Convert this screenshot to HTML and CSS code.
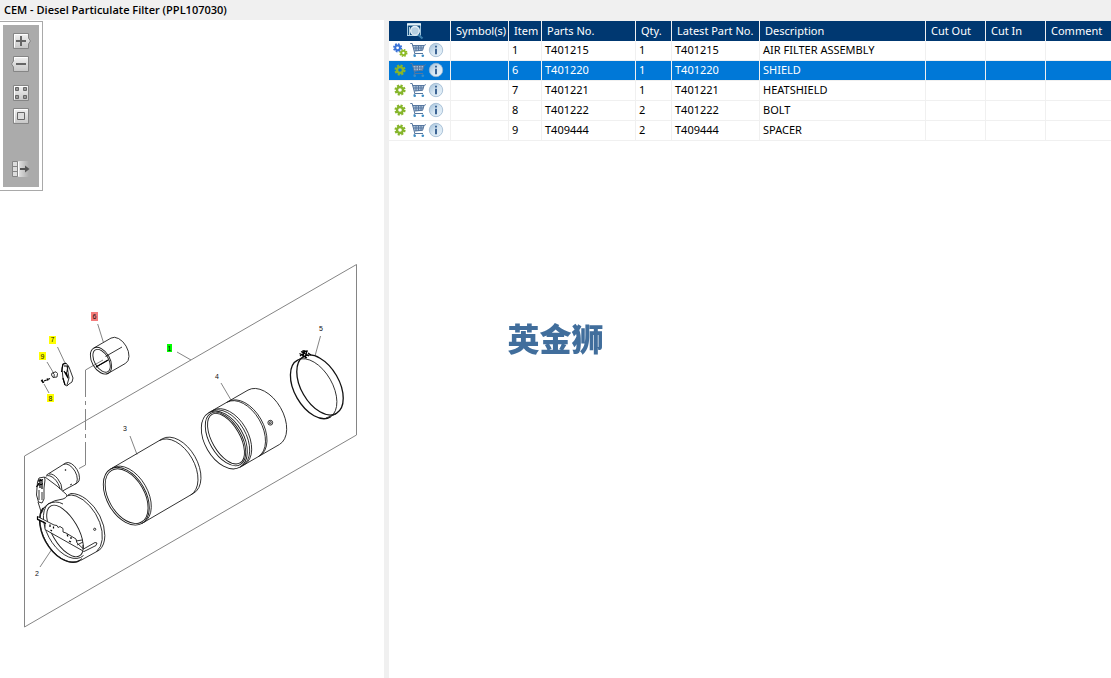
FILE: index.html
```html
<!DOCTYPE html>
<html lang="en">
<head>
<meta charset="utf-8">
<title>CEM - Diesel Particulate Filter (PPL107030)</title>
<link rel="stylesheet" href="styles.css">
</head>
<body>
<svg class="defs" aria-hidden="true">
  <defs>
    <linearGradient id="face" x1="0" y1="0" x2="0" y2="1"><stop offset="0" stop-color="#f2f2f2"/><stop offset="1" stop-color="#c6c6c6"/></linearGradient>
    <linearGradient id="fade" x1="0" y1="0" x2="1" y2="0"><stop offset="0" stop-color="#e4e4e4"/><stop offset="1" stop-color="#ababab"/></linearGradient>
    <linearGradient id="disc" x1="0" y1="0" x2="1" y2="1"><stop offset="0" stop-color="#9dbdd8"/><stop offset=".5" stop-color="#d6e6f2"/><stop offset="1" stop-color="#eaf3fa"/></linearGradient>
    <symbol id="cog" viewBox="0 0 16 16">
      <circle cx="8" cy="8" r="4.6" fill="none" stroke="#86b52b" stroke-width="2" stroke-dasharray="2.1 1.51"/>
      <circle cx="8" cy="8" r="3" fill="none" stroke="#86b52b" stroke-width="2.4"/>
    </symbol>
    <symbol id="cogs" viewBox="0 0 16 16">
      <g fill="none" stroke="#3b74d8"><circle cx="5.6" cy="5.8" r="3.7" stroke-width="1.8" stroke-dasharray="1.7 1.2"/><circle cx="5.6" cy="5.8" r="2.4" stroke-width="2"/></g>
      <g fill="none" stroke="#8dbb27"><circle cx="11.4" cy="11" r="3.3" stroke-width="1.6" stroke-dasharray="1.5 1.1"/><circle cx="11.4" cy="11" r="2.1" stroke-width="1.9"/></g>
    </symbol>
    <symbol id="cart" viewBox="0 0 16 16">
      <path d="M2.5 3.5H14L12.5 8.5L4.5 9.2Z" fill="#a9bfd8"/>
      <path d="M.3 1.5H2.2L4.8 11.5H13M2.5 3.5H14.2L15.8 2.5M14 3.5L12.6 8.3L4.3 9M3.5 6H13.2M6 4V9M8.5 4V9M11 4V8.5M4.8 11.5L4 13" fill="none" stroke="#56779f"/>
      <circle cx="4.7" cy="13.8" r="1.3" fill="#3c8cc4"/><circle cx="12.8" cy="13.8" r="1.3" fill="#3c8cc4"/>
    </symbol>
    <symbol id="info" viewBox="0 0 16 16">
      <circle cx="8" cy="8" r="6.7" fill="url(#disc)" stroke="#9ab6cf" stroke-width=".8"/>
      <path d="M7 3.8H9V5.6H7ZM7 6.8H9V12.2H7Z" fill="#3c6595"/>
    </symbol>
    <symbol id="preview" viewBox="0 0 18 18">
      <path d="M1.5 1.5H14.5V13.5H1.5Z" fill="#155080" stroke="#9fc4dc"/>
      <path d="M1 2.5H15" stroke="#e4f1f8" stroke-width="2"/><path d="M3.5 5V13M1 13.5H12" stroke="#b5d3e5"/>
      <path d="M12 12.5L16.5 16.5" stroke="#3b7fae" stroke-width="2.2"/>
      <circle cx="9" cy="8.8" r="4.3" fill="#b5cee0" stroke="#e5eff6" stroke-width="1.4"/>
    </symbol>
  </defs>
</svg>

<header class="titlebar"><h1>CEM - Diesel Particulate Filter (PPL107030)</h1></header>

<main class="workspace">
  <section class="drawing" aria-label="Exploded view">
    <svg class="sheet" viewBox="0 20 384 658" role="img" aria-label="Diesel particulate filter assembly">
      <g class="frame">
        <path d="M356.500 264.500V435L24.500 627V456Z"/>
        <path d="M177 352L191 360M97.700 324L103.300 342M57.500 347L65 363M47 362L53 372M49 393L44 384M130 436L137 454.500M221 383L231 400M320.500 336L315 356M40 567L52 549"/>
        <path d="M85.500 370V397M85.500 401V405M85.500 409V430M85.500 434V438M85.500 442V465L79 468.500M85.500 370L103 360"/>
      </g>
      <g class="ink">
        <path d="M93.700 348.100L111 338.100A9 14.500 -30 0 1 125.600 363.300L108.200 373.300"/>
        <ellipse cx="101" cy="360.700" rx="9" ry="14.500" transform="rotate(-30 101 360.700)"/>
        <ellipse cx="101.600" cy="360.800" rx="7" ry="12.500" transform="rotate(-30 101.600 360.800)"/>
        <path d="M105.500 356.500L122 347M96 367L108.500 360"/>
        <path class="bold" d="M96 367L108 360"/>
      </g>
      <g class="ink">
        <path d="M62 368L63 364L66 363L69 367L73 378L72 382L69 384L67 386L65 385L63 379Z"/>
        <path class="bold" d="M61.500 372L63 364L66 363.500M64 366L68 366L67 372M66 372L68 378L64 371M63 378L65 385"/>
        <path d="M67 366L69 378L67 385"/>
        <path d="M52 373L56 371.800L57.500 373.500L57 377L53 377.500L51.500 375ZM53 373Q55 374 54 377"/>
        <path class="bold" d="M41 380.500L44 382.500M42 379.500L43 383M44 381L50 378.500M47 378.500L48 380.500"/>
      </g>
      <g class="ink">
        <path d="M110.600 469L162.300 438.800A19.400 31.400 -30 0 1 193.700 493.200L142 523.400"/>
        <path d="M159.300 440.600A19.400 31.400 -30 0 1 190.700 495"/>
        <ellipse cx="126.300" cy="496.200" rx="19.400" ry="31.400" transform="rotate(-30 126.300 496.200)"/>
        <ellipse cx="126.600" cy="496.200" rx="17.800" ry="29.800" transform="rotate(-30 126.600 496.200)"/>
        <path d="M112.600 467.800A19.400 31.400 -30 0 1 144 522.200"/>
      </g>
      <g class="ink">
        <path d="M208.600 412.800L248 390.100A19.400 31.400 -30 0 1 279.400 444.500L240 467.200"/>
        <path d="M226.800 402.300A19.400 31.400 -30 0 1 258.200 456.700M228.300 401.500A19.400 31.400 -30 0 1 259.700 455.900M211 411.500A19.400 31.400 -30 0 1 242.400 465.900M213 410.300A19.400 31.400 -30 0 1 244.400 464.700"/>
        <ellipse cx="224.300" cy="440" rx="19.400" ry="31.400" transform="rotate(-30 224.300 440)"/>
        <ellipse cx="225.500" cy="439" rx="16" ry="29.500" transform="rotate(-30 225.500 439)"/>
        <ellipse cx="226" cy="438.700" rx="13.900" ry="28" transform="rotate(-30 226 438.700)"/>
        <circle cx="270.300" cy="422.700" r="2.400"/><circle cx="270.300" cy="422.700" r="1"/>
      </g>
      <g class="ink">
        <ellipse class="heavy" cx="320" cy="385" rx="19" ry="32.800" transform="rotate(-30 320 385)"/>
        <path class="heavy" d="M298 359.900A19 32.800 -30 1 0 330.700 416.700"/>
        <path d="M298 359.900A19 32.800 -30 0 1 330.700 416.700M298 359.900L303.600 356.600M326 418L336 414"/>
        <path class="bold" d="M299.500 353.500L307 358M301 351.500L309 356M304 350L303 357.500M307 350.500L305 358.500M300 356L306 351M308 353L311 355M302 351L308 351"/>
      </g>
      <g class="ink">
        <path d="M46.500 475L65.700 463A6.500 11.500 -30 0 1 77.200 483L62.500 491"/>
        <path d="M63.500 464.400A6.500 11.500 -30 0 1 75 484.400M46 476A7 12 -30 0 1 60 489M49 474A7 12 -30 0 1 62 490"/>
        <circle cx="65.500" cy="470" r=".5"/><path d="M70 485L72 484"/>
        <path d="M45 477L57 486L66.500 494.500Q68 497 63 499Q54 500 48 504Q43 507 41.500 513"/>
        <path d="M68 495L71 493.500A20.300 32.600 -30 0 1 99.500 550L80.500 560.500"/>
        <path d="M66.500 496Q71 494 76 496A20.300 32.600 -30 0 1 96.500 551.600"/>
        <path class="heavy" d="M43 508A20.300 32.600 -30 0 0 80.300 560.200"/>
        <path d="M44.500 507A19 31.500 -30 0 0 82 558.500M48 504A17.500 30 -30 0 0 83.500 555.500"/>
        <path d="M48 504Q56 500 63 504"/>
        <ellipse cx="65" cy="531" rx="13" ry="28.800" transform="rotate(-30 65 531)"/>
        <path d="M37.500 482L39 478L44.500 477L45 480L44 488L44 499L42 503L38.500 502L36.500 495L37 488ZM38 502L41.500 513"/>
        <path class="bold" d="M38 481L43 479.500M37.500 485L43 484M40 479V488M42 480L42 489M36.500 487L39 483"/>
        <path d="M39 490V500M42 492V500"/>
        <path class="paper" d="M37.500 516.500L54 525L57 525.500L58 527.500L60 526.500L63 528.500V532L66 533L76 539L77 543L83.500 549L95 542.500L97 543L96 545.500L84 551.500L45 529.500L45 522.500L37.500 519Z"/>
        <path class="bold" d="M37.500 516.500V519.500L46 523.500"/>
        <path class="bold" d="M50 524.500L50 527M53.500 526.500V528.500M67 534.500L68 536.500M71 537V539M50.500 530L52 531M69 541L71 542"/>
        <path d="M76 541L82 540M77 545L83 542M83 550V545"/>
        <circle cx="94.700" cy="529.300" r="1.100"/>
      </g>
      <g class="marks">
        <rect class="mark-yellow" x="49" y="336" width="7" height="8"/>
        <rect class="mark-yellow" x="39" y="352" width="7" height="8"/>
        <rect class="mark-yellow" x="47" y="394" width="7" height="8"/>
        <rect class="mark-red" x="91" y="312" width="7" height="9"/>
        <rect class="mark-green" x="167" y="344" width="5" height="8"/>
      </g>
      <g class="callouts">
        <text x="169.500" y="351">1</text><text x="37" y="576">2</text><text x="125" y="431">3</text>
        <text x="217" y="379">4</text><text x="321" y="331">5</text><text x="94.500" y="319">6</text>
        <text x="52.500" y="342">7</text><text x="50.500" y="401">8</text><text x="42.500" y="359">9</text>
      </g>
    </svg>

    <div class="toolbar" role="toolbar" aria-label="Drawing tools">
      <div class="tools">
        <div class="tool-group">
          <button class="tool" aria-label="Zoom in"><svg viewBox="0 0 20 16"><path d="M2.500 .5H17.500V5L19.500 8L17.500 11V15.500H2.500Z" fill="url(#face)" stroke="#858585"/><path d="M3.500 14.500V1.500H16.500" fill="none" stroke="#fff"/><path d="M5 8H15M10 3V13" stroke="#666" stroke-width="2"/></svg></button>
          <button class="tool" aria-label="Zoom out"><svg viewBox="0 0 20 16"><path d="M2.500 .5H17.500V15.500H2.500V11L.5 8L2.500 5Z" fill="url(#face)" stroke="#858585"/><path d="M3.500 4V1.500H16.500" fill="none" stroke="#fff"/><path d="M5 8H15" stroke="#666" stroke-width="2"/></svg></button>
        </div>
        <div class="tool-group">
          <button class="tool" aria-label="Fit all"><svg viewBox="0 0 20 16"><path d="M2.500 .5H17.500V15.500H2.500Z" fill="url(#face)" stroke="#858585"/><path d="M3.500 14.500V1.500H16.500" fill="none" stroke="#fff"/><path d="M4.500 2.500H7.500V5.500H4.500ZM12.500 2.500H15.500V5.500H12.500ZM4.500 10.500H7.500V13.500H4.500ZM12.500 10.500H15.500V13.500H12.500Z" fill="#999" stroke="#666"/></svg></button>
          <button class="tool" aria-label="Actual size"><svg viewBox="0 0 20 16"><path d="M2.500 .5H17.500V15.500H2.500Z" fill="url(#face)" stroke="#858585"/><path d="M3.500 14.500V1.500H16.500" fill="none" stroke="#fff"/><path d="M6.500 4.500H13.500V11.500H6.500Z" fill="#ddd" stroke="#666"/></svg></button>
        </div>
        <button class="tool" aria-label="Toggle parts list"><svg viewBox="0 0 20 16"><path d="M7 0H18V16H7Z" fill="url(#fade)"/><path d="M1.500 .5H6.500V15.500H1.500ZM1.500 5.500H6.500M1.500 10.500H6.500" fill="#ddd" stroke="#858585"/><path d="M7.500 1V15" stroke="#fff"/><path d="M9 8H15" stroke="#555" stroke-width="2"/><path d="M14 4.500L18.500 8L14 11.500Z" fill="#555"/></svg></button>
      </div>
    </div>
  </section>

  <section class="parts" aria-label="Parts list">
    <table class="grid">
      <colgroup><col class="c-icons"><col class="c-symbol"><col class="c-item"><col class="c-part"><col class="c-qty"><col class="c-latest"><col class="c-desc"><col class="c-cut"><col class="c-cut"><col></colgroup>
      <thead>
        <tr><th class="preview"><button class="icon wide" aria-label="Preview"><svg><use href="#preview"/></svg></button></th><th>Symbol(s)</th><th>Item</th><th>Parts No.</th><th>Qty.</th><th>Latest Part No.</th><th>Description</th><th>Cut Out</th><th>Cut In</th><th>Comment</th></tr>
      </thead>
      <tbody>
        <tr><td><div class="actions"><button class="icon" aria-label="Assembly"><svg><use href="#cogs"/></svg></button><button class="icon" aria-label="Add to cart"><svg><use href="#cart"/></svg></button><button class="icon" aria-label="Information"><svg><use href="#info"/></svg></button></div></td><td></td><td>1</td><td>T401215</td><td>1</td><td>T401215</td><td>AIR FILTER ASSEMBLY</td><td></td><td></td><td></td></tr>
        <tr class="selected"><td><div class="actions"><button class="icon" aria-label="Part"><svg><use href="#cog"/></svg></button><button class="icon" aria-label="Add to cart"><svg><use href="#cart"/></svg></button><button class="icon" aria-label="Information"><svg><use href="#info"/></svg></button></div></td><td></td><td>6</td><td>T401220</td><td>1</td><td>T401220</td><td>SHIELD</td><td></td><td></td><td></td></tr>
        <tr><td><div class="actions"><button class="icon" aria-label="Part"><svg><use href="#cog"/></svg></button><button class="icon" aria-label="Add to cart"><svg><use href="#cart"/></svg></button><button class="icon" aria-label="Information"><svg><use href="#info"/></svg></button></div></td><td></td><td>7</td><td>T401221</td><td>1</td><td>T401221</td><td>HEATSHIELD</td><td></td><td></td><td></td></tr>
        <tr><td><div class="actions"><button class="icon" aria-label="Part"><svg><use href="#cog"/></svg></button><button class="icon" aria-label="Add to cart"><svg><use href="#cart"/></svg></button><button class="icon" aria-label="Information"><svg><use href="#info"/></svg></button></div></td><td></td><td>8</td><td>T401222</td><td>2</td><td>T401222</td><td>BOLT</td><td></td><td></td><td></td></tr>
        <tr><td><div class="actions"><button class="icon" aria-label="Part"><svg><use href="#cog"/></svg></button><button class="icon" aria-label="Add to cart"><svg><use href="#cart"/></svg></button><button class="icon" aria-label="Information"><svg><use href="#info"/></svg></button></div></td><td></td><td>9</td><td>T409444</td><td>2</td><td>T409444</td><td>SPACER</td><td></td><td></td><td></td></tr>
      </tbody>
    </table>
  </section>
</main>

<div class="watermark" lang="zh">英金狮</div>
</body>
</html>
```
FILE: styles.css
```css
* { box-sizing: border-box; }

body {
  margin: 0;
  min-height: 100vh;
  display: flex;
  flex-direction: column;
  background: #fff;
  color: #000;
  font: 11px/17px "Noto Sans", "Open Sans", sans-serif;
}

.defs { position: absolute; width: 0; height: 0; }

.titlebar { background: #f0f0f0; padding: 0 4px; }
.titlebar h1 { margin: 0; font-size: 11px; line-height: 20px; font-weight: 600; font-family: "Open Sans", sans-serif; }

.workspace {
  flex: 1;
  display: grid;
  grid-template-columns: 389px minmax(0, 1fr);
}

.drawing { position: relative; border-right: 5px solid #f0f0f0; }
.sheet { display: block; width: 100%; }

.frame { fill: none; stroke: #858585; stroke-width: 1; }
.ink { fill: none; stroke: #1c1c1c; stroke-width: .9; stroke-linejoin: round; }
.heavy { stroke: #111; stroke-width: 1.3; }
.bold { stroke: #000; stroke-width: 1.2; }
.paper { fill: #fff; }
.mark-yellow { fill: #ff0; }
.mark-red { fill: #f47c7c; }
.mark-green { fill: #0f0; }
.callouts { font: 7px "Liberation Sans", sans-serif; text-anchor: middle; fill: #111; }

.toolbar {
  position: absolute;
  top: 1px;
  left: 0;
  padding: 3px;
  background: #fff;
  border: 1px solid #a9a9a9;
  border-left: 0;
}
.tools {
  display: flex;
  flex-direction: column;
  padding: 8px 8px 10px;
  background: #ababab;
}
.tool-group { display: flex; flex-direction: column; gap: 7px; margin-bottom: 13px; }
.tool-group + .tool-group { margin-bottom: 37px; }
.tool { padding: 0; border: 0; background: none; width: 20px; height: 16px; }
.tool svg { display: block; width: 20px; height: 16px; }

.parts { border-top: 1px solid #f0f0f0; }
.grid { width: 100%; table-layout: fixed; border-collapse: separate; border-spacing: 0; }
.c-icons { width: 62px; }
.c-symbol { width: 58px; }
.c-item { width: 33px; }
.c-part { width: 94px; }
.c-qty { width: 36px; }
.c-latest { width: 88px; }
.c-desc { width: 166px; }
.c-cut { width: 60px; }

.grid th, .grid td {
  height: 20px;
  border-right: 1px solid #f0f0f0;
  text-align: left;
  white-space: nowrap;
}
.grid th { padding: 0 0 0 5px; background: #003871; color: #fff; font-weight: 400; line-height: 20px; }
.grid td { padding: 0 0 0 3px; border-bottom: 1px solid #f0f0f0; vertical-align: top; }
.grid th:last-child, .grid td:last-child { border-right: 0; }
.grid .selected td { background: #0078d7; color: #fff; }
.grid .preview { padding: 0; }

.actions { display: flex; gap: 2px; padding-top: 1px; }
.icon { padding: 0; border: 0; background: none; width: 16px; height: 16px; }
.icon svg { display: block; width: 100%; height: 100%; }
.wide { display: block; width: 18px; height: 18px; margin: 0 17px; }

.watermark {
  position: fixed;
  inset: 0;
  display: grid;
  place-items: center;
  padding-bottom: 5px;
  pointer-events: none;
  color: #416e9c;
  font: 900 32px/32px "Noto Sans CJK SC", sans-serif;
}
```
